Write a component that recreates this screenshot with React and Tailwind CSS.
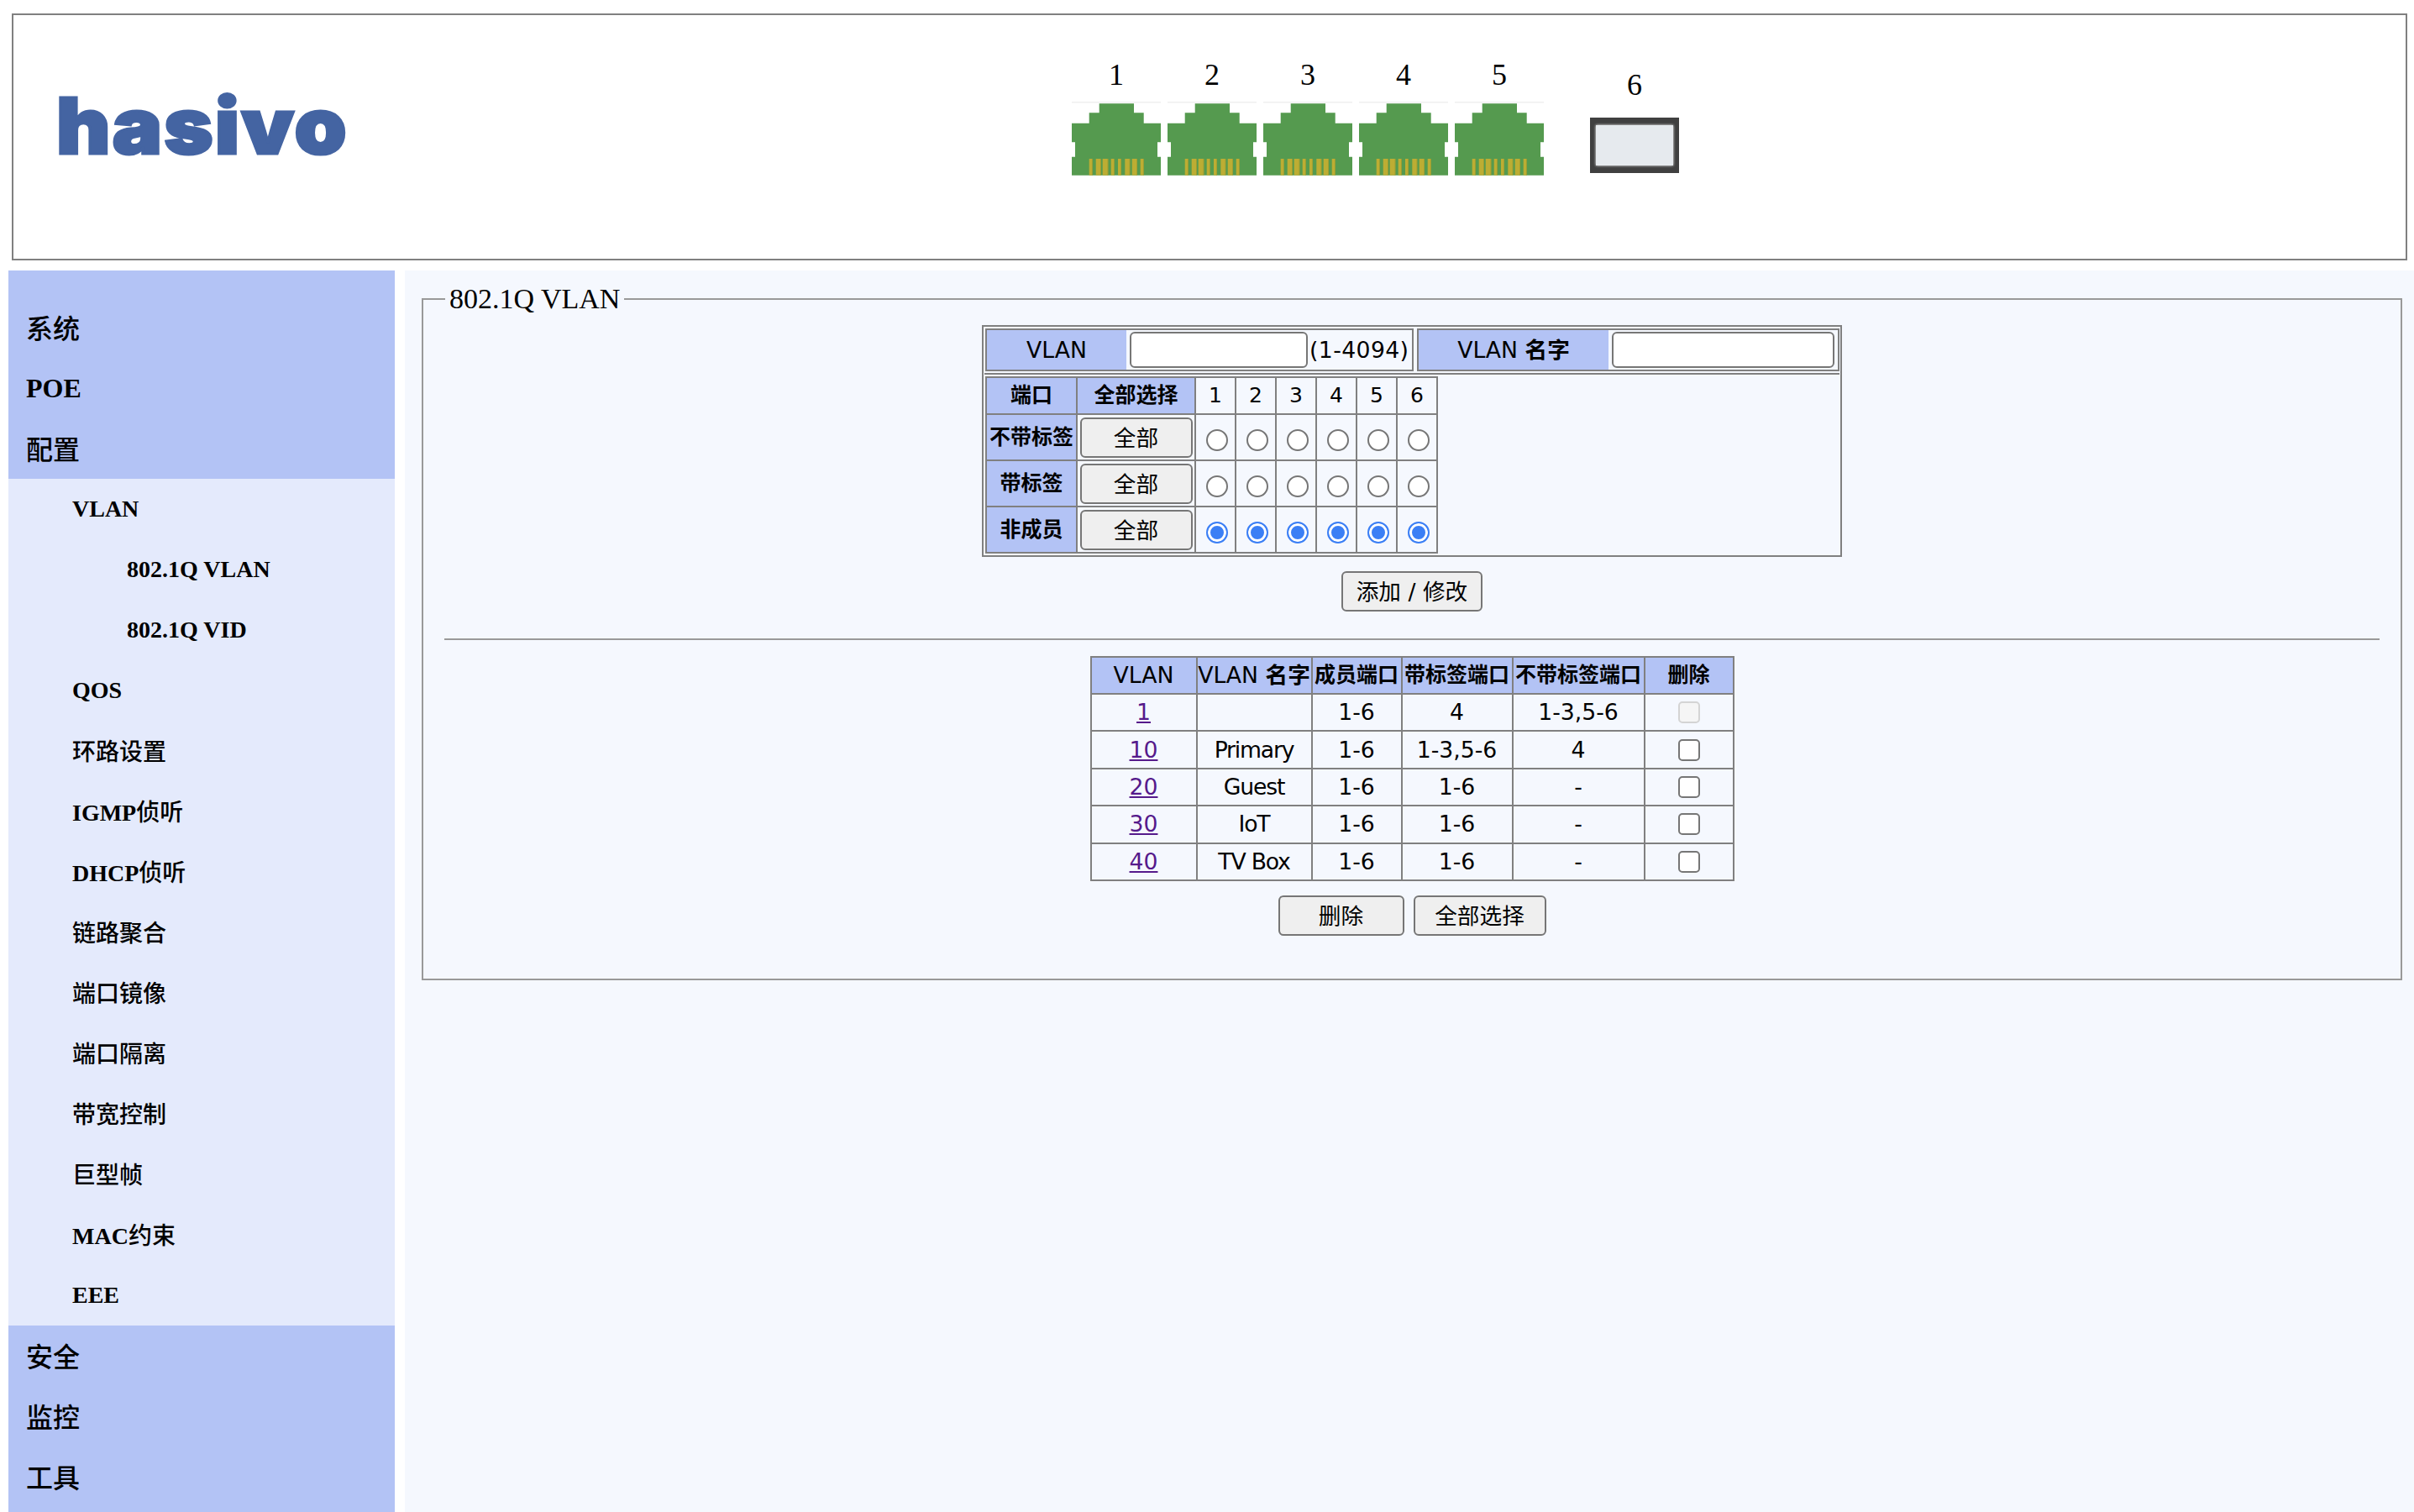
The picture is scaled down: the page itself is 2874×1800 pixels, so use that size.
import React from "react";

const sans = "font-['DejaVu_Sans','Noto_Sans_CJK_SC',sans-serif]";
const serif = "font-['Liberation_Serif','Noto_Sans_CJK_SC',serif]";

const PINS = [
  [20.7, 4],
  [28.7, 6],
  [36.7, 6.6],
  [46.7, 4],
  [55, 4],
  [63.3, 6],
  [71.7, 6.3],
  [81.7, 4],
];

function Rj45() {
  return (
    <svg width="106" height="88" viewBox="0 0 106 88" className="block">
      <rect x="0" y="0" width="106" height="1.5" fill="#f0f0f0" />
      <path
        d="M32.7 2.3H74V13.3H85.7V25.7H106V48.3H102V65.7H106V87.7H0V65.7H4V48.3H0V25.7H20.7V13.3H32.7Z"
        fill="#559a4f"
      />
      {PINS.map(([x, w]) => (
        <g key={x}>
          <rect x={x} y="68" width={w} height="19.7" fill="#bdad33" />
          <rect x={x + w - 0.7} y="68" width="0.7" height="19.7" fill="#9a9a30" />
        </g>
      ))}
    </svg>
  );
}

function Port({ n }) {
  return (
    <div className="flex w-[106px] flex-col items-center pt-[50px]">
      <div className={`${serif} mb-[11px] h-[42px] text-[36px] leading-[42px] text-black`}>{n}</div>
      <Rj45 />
    </div>
  );
}

function Header() {
  return (
    <div className="ml-[14px] mr-[8px] mt-[16px] flex h-[294px] border-2 border-[#808080] bg-white">
      <div className="w-[1260px] pl-[51px] pt-[86px]">
        <span className="inline-block origin-left scale-x-[1.08] font-['Inter',sans-serif] text-[92px] font-black leading-none tracking-[2px] text-[#4464a2] [-webkit-text-stroke:3px_#4464a2]">
          hasivo
        </span>
      </div>
      <div className="flex gap-2">
        {[1, 2, 3, 4, 5].map((n) => (
          <Port key={n} n={n} />
        ))}
      </div>
      <div className="ml-[55px] flex w-[106px] flex-col items-center pt-[62px]">
        <div className={`${serif} mb-[18px] h-[42px] text-[36px] leading-[42px] text-black`}>6</div>
        <div className="h-[66px] w-[106px] bg-[#404040] px-[7px] py-[9px]">
          <div className="h-full w-full bg-[#e6eaee] shadow-[0_0_3px_#ffffff]" />
        </div>
      </div>
    </div>
  );
}

const SUB_MENU = [
  { label: "VLAN", indent: "pl-[76px]" },
  { label: "802.1Q VLAN", indent: "pl-[141px]" },
  { label: "802.1Q VID", indent: "pl-[141px]" },
  { label: "QOS", indent: "pl-[76px]" },
  { label: "环路设置", indent: "pl-[76px]" },
  { label: "IGMP侦听", indent: "pl-[76px]" },
  { label: "DHCP侦听", indent: "pl-[76px]" },
  { label: "链路聚合", indent: "pl-[76px]" },
  { label: "端口镜像", indent: "pl-[76px]" },
  { label: "端口隔离", indent: "pl-[76px]" },
  { label: "带宽控制", indent: "pl-[76px]" },
  { label: "巨型帧", indent: "pl-[76px]" },
  { label: "MAC约束", indent: "pl-[76px]" },
  { label: "EEE", indent: "pl-[76px]" },
];

const CJK = /([\u4e00-\u9fff]+)/;

// latin parts are bold, chinese parts a bit lighter
function Label({ text }) {
  return (
    <span className={CJK.test(text) ? "pt-[3px]" : ""}>
      {text.split(CJK).map((part, i) =>
        CJK.test(part) ? (
          <span key={i} className="font-medium">
            {part}
          </span>
        ) : (
          <span key={i} className="font-bold">
            {part}
          </span>
        )
      )}
    </span>
  );
}

function TopItem({ label }) {
  return (
    <div className="flex h-[72px] items-center pl-[21px] text-[32px]">
      <Label text={label} />
    </div>
  );
}

function Sidebar() {
  return (
    <div className={`${serif} ml-[10px] w-[460px] shrink-0 text-black`}>
      <div className="bg-[#b3c3f5] pt-[32px]">
        <TopItem label="系统" />
        <TopItem label="POE" />
        <TopItem label="配置" />
      </div>
      <div className="bg-[#e4eafc]">
        {SUB_MENU.map((item) => (
          <div key={item.label} className={`flex h-[72px] items-center text-[28px] ${item.indent}`}>
            <Label text={item.label} />
          </div>
        ))}
      </div>
      <div className="h-[222px] bg-[#b3c3f5]">
        <TopItem label="安全" />
        <TopItem label="监控" />
        <TopItem label="工具" />
      </div>
    </div>
  );
}

function Button({ children, className }) {
  return (
    <button
      type="button"
      className={`${sans} h-[48px] rounded-[6px] border-2 border-[#767676] bg-[#efefef] pt-[3px] text-[26.67px] leading-none text-black ${className}`}
    >
      {children}
    </button>
  );
}

function Radio({ name, checked }) {
  return (
    <input
      type="radio"
      name={name}
      defaultChecked={checked}
      className="ml-[3px] mt-[3px] h-[26px] w-[26px] appearance-none rounded-full border-2 border-[#767676] bg-white align-middle checked:border-[#3b7ff5] checked:bg-[#3b7ff5] checked:shadow-[inset_0_0_0_3px_#ffffff]"
    />
  );
}

const th = "border-2 border-[#808080] bg-[#b3c3f5] p-0 text-center font-normal";
const td = "border-2 border-[#808080] p-0 text-center";

function PortRow({ label, name, checked }) {
  return (
    <tr className="h-[55px]">
      <th className={`${th} text-[25px]`}>
        <span className="font-bold">{label}</span>
      </th>
      <td className={td}>
        <Button className="w-[134px]">全部</Button>
      </td>
      {[1, 2, 3, 4, 5, 6].map((n) => (
        <td key={n} className={td}>
          <Radio name={`${name}${n}`} checked={checked} />
        </td>
      ))}
    </tr>
  );
}

function VlanForm() {
  return (
    <div className="mt-[11px] h-[276px] w-[1024px] border-2 border-[#808080] p-[1px]">
      <div className="flex h-[56px] gap-[4px] border-b-2 border-[#808080] pb-[2px] pl-[1px] pt-[1px]">
        <div className="flex w-[510px] items-stretch gap-[4px] border-2 border-[#808080]">
          <div className="flex w-[166px] items-center justify-center bg-[#b3c3f5]">VLAN</div>
          <div className="flex flex-1 items-center">
            <input type="text" className="h-[43px] w-[212px] rounded-[6px] border-2 border-[#767676] bg-white" />
            <span className="ml-[2px] tracking-[0.4px]">(1-4094)</span>
          </div>
        </div>
        <div className="flex w-[503px] items-stretch gap-[4px] border-2 border-[#808080]">
          <div className="flex w-[226px] items-center justify-center bg-[#b3c3f5]">
            VLAN&nbsp;<span className="font-bold">名字</span>
          </div>
          <div className="flex flex-1 items-center">
            <input type="text" className="h-[43px] w-[265px] rounded-[6px] border-2 border-[#767676] bg-white" />
          </div>
        </div>
      </div>
      <table className="ml-[1px] mt-[2px] table-fixed border-collapse">
        <thead>
          <tr className="h-[44px]">
            <th className={`${th} w-[108px] text-[25px]`}>
              <span className="font-bold">端口</span>
            </th>
            <th className={`${th} w-[141px] text-[25px]`}>
              <span className="font-bold">全部选择</span>
            </th>
            {[1, 2, 3, 4, 5, 6].map((n) => (
              <td key={n} className={`${td} w-[48px] text-[25px]`}>
                {n}
              </td>
            ))}
          </tr>
        </thead>
        <tbody>
          <PortRow label="不带标签" name="untag" />
          <PortRow label="带标签" name="tag" />
          <PortRow label="非成员" name="none" checked />
        </tbody>
      </table>
    </div>
  );
}

const VLANS = [
  { id: "1", name: "", member: "1-6", tagged: "4", untagged: "1-3,5-6", locked: true },
  { id: "10", name: "Primary", member: "1-6", tagged: "1-3,5-6", untagged: "4" },
  { id: "20", name: "Guest", member: "1-6", tagged: "1-6", untagged: "-" },
  { id: "30", name: "IoT", member: "1-6", tagged: "1-6", untagged: "-" },
  { id: "40", name: "TV Box", member: "1-6", tagged: "1-6", untagged: "-" },
];

function VlanTable() {
  return (
    <table className="mt-[19px] table-fixed border-collapse">
      <thead>
        <tr className="h-[44px]">
          <th className={`${th} w-[126px]`}>VLAN</th>
          <th className={`${th} w-[137px] whitespace-nowrap`}>
            VLAN&nbsp;<span className="font-bold">名字</span>
          </th>
          <th className={`${th} w-[107px] text-[25px]`}>
            <span className="font-bold">成员端口</span>
          </th>
          <th className={`${th} w-[132px] text-[25px]`}>
            <span className="font-bold">带标签端口</span>
          </th>
          <th className={`${th} w-[157px] text-[25px]`}>
            <span className="font-bold">不带标签端口</span>
          </th>
          <th className={`${th} w-[106px] text-[25px]`}>
            <span className="font-bold">删除</span>
          </th>
        </tr>
      </thead>
      <tbody>
        {VLANS.map((v) => (
          <tr key={v.id} className="h-[44.4px]">
            <td className={td}>
              <a href="#" className="text-[#551a8b] underline">
                {v.id}
              </a>
            </td>
            <td className={`${td} tracking-[-1.2px]`}>{v.name}</td>
            <td className={td}>{v.member}</td>
            <td className={td}>{v.tagged}</td>
            <td className={td}>{v.untagged}</td>
            <td className={td}>
              <input
                type="checkbox"
                disabled={v.locked}
                className="mb-[3px] h-[26px] w-[26px] appearance-none rounded-[5px] border-2 border-[#767676] bg-white align-middle disabled:border-[#d4d4d4] disabled:bg-[#f5f5f5]"
              />
            </td>
          </tr>
        ))}
      </tbody>
    </table>
  );
}

function Content() {
  return (
    <div className="ml-[12px] flex-1 bg-[#f5f8fe] pl-[20px] pr-[14px] pt-[14px]">
      <fieldset className={`${sans} flex h-[831px] min-w-0 flex-col items-center border-2 border-[#999999] text-[26.67px] text-black`}>
        <legend className={`${serif} ml-[26px] px-[5px] text-[34px] leading-[40px]`}>802.1Q VLAN</legend>
        <VlanForm />
        <Button className="mt-[17px] w-[168px]">添加 / 修改</Button>
        <hr className="mt-[32px] h-0 w-[2304px] border-t-2 border-[#999999]" />
        <VlanTable />
        <div className="mt-[17px] flex gap-[11px]">
          <Button className="w-[150px]">删除</Button>
          <Button className="w-[158px]">全部选择</Button>
        </div>
      </fieldset>
    </div>
  );
}

export default function App() {
  return (
    <div className="h-[1800px] w-[2874px] overflow-hidden bg-white">
      <Header />
      <div className="mt-[12px] flex h-[1478px]">
        <Sidebar />
        <Content />
      </div>
    </div>
  );
}
